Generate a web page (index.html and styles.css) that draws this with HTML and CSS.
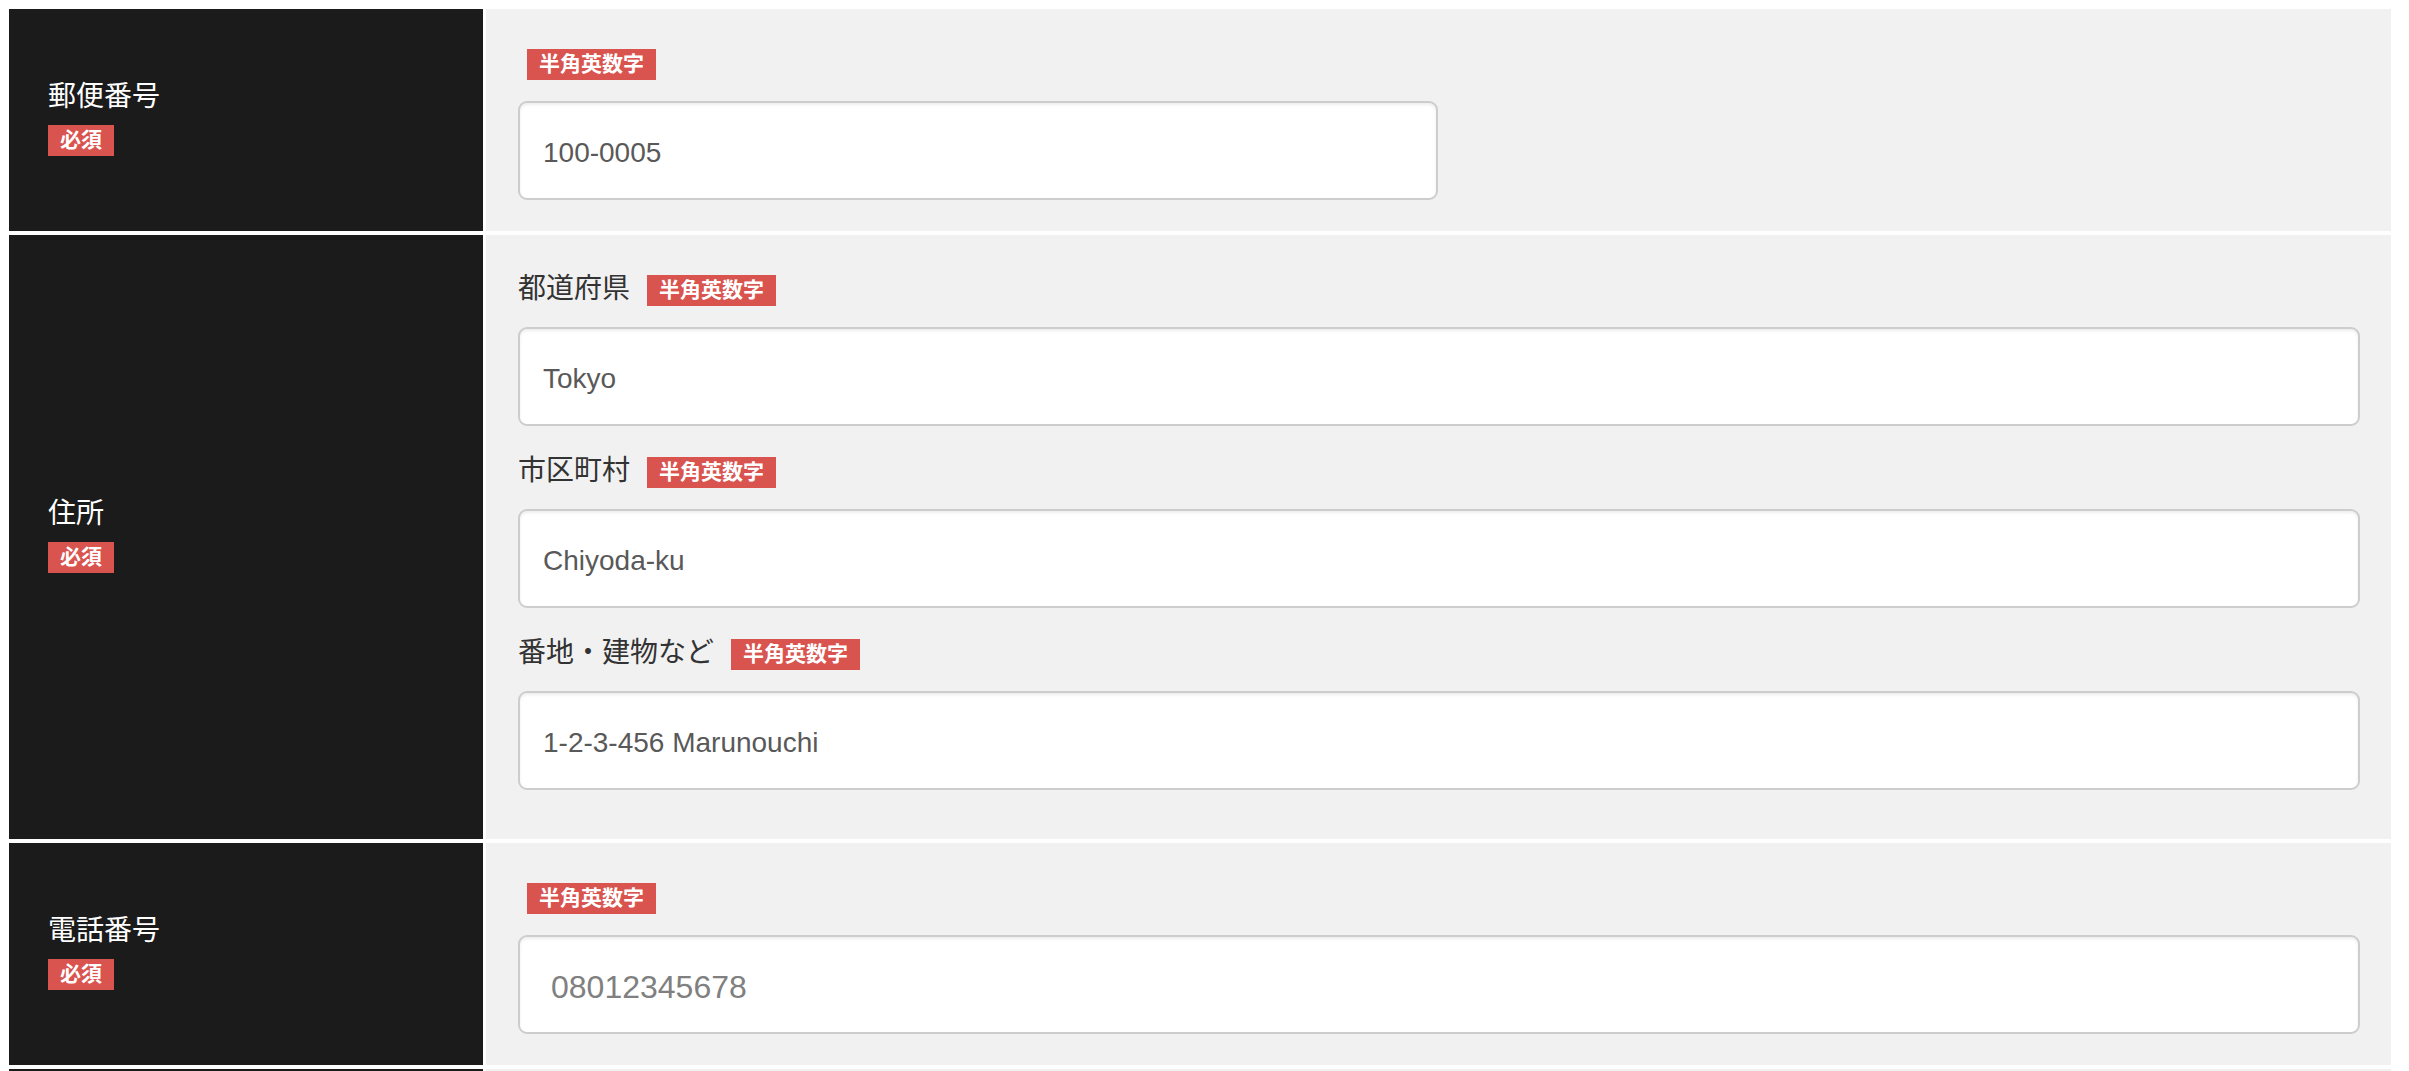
FILE: index.html
```html
<!DOCTYPE html>
<html lang="ja">
<head>
    <meta charset="UTF-8">
    <title>お届け先情報</title>
    <link rel="stylesheet" href="styles.css">
</head>
<body>

    <form class="form-table">
        <!-- 郵便番号 -->
        <div class="form-row">
            <div class="form-head">
                <span class="head-label">郵便番号</span>
                <span class="badge">必須</span>
            </div>
            <div class="form-body">
                <div class="field">
                    <div class="field-label"><span class="badge badge-note">半角英数字</span></div>
                    <input class="text-input text-input-short" type="text" name="zip" value="100-0005">
                </div>
            </div>
        </div>

        <!-- 住所 -->
        <div class="form-row">
            <div class="form-head">
                <span class="head-label">住所</span>
                <span class="badge">必須</span>
            </div>
            <div class="form-body form-body-multi">
                <div class="field">
                    <div class="field-label"><span class="field-name">都道府県</span><span class="badge badge-note">半角英数字</span></div>
                    <input class="text-input" type="text" name="pref" value="Tokyo">
                </div>
                <div class="field">
                    <div class="field-label"><span class="field-name">市区町村</span><span class="badge badge-note">半角英数字</span></div>
                    <input class="text-input" type="text" name="city" value="Chiyoda-ku">
                </div>
                <div class="field">
                    <div class="field-label"><span class="field-name">番地・建物など</span><span class="badge badge-note">半角英数字</span></div>
                    <input class="text-input" type="text" name="street" value="1-2-3-456 Marunouchi">
                </div>
            </div>
        </div>

        <!-- 電話番号 -->
        <div class="form-row">
            <div class="form-head">
                <span class="head-label">電話番号</span>
                <span class="badge">必須</span>
            </div>
            <div class="form-body">
                <div class="field">
                    <div class="field-label"><span class="badge badge-note">半角英数字</span></div>
                    <input class="text-input text-input-tel" type="tel" name="tel" value="08012345678">
                </div>
            </div>
        </div>

        <!-- 次の行（画面外） -->
        <div class="form-row form-row-next">
            <div class="form-head"></div>
            <div class="form-body"></div>
        </div>
    </form>

</body>
</html>
```

FILE: styles.css
```css
html {
    overflow: hidden;
}
body {
    font-family: "Liberation Sans", "Noto Sans CJK JP", sans-serif;
    background-color: #ffffff;
    color: #333;
    margin: 0;
    padding: 9px 18px 0 9px;
}
.form-table {
    display: flex;
    flex-direction: column;
    gap: 4px;
}
.form-row {
    display: grid;
    grid-template-columns: 474px 1fr;
    column-gap: 3px;
}
.form-row-next {
    min-height: 222px;
}
.form-head {
    background-color: #1b1b1b;
    display: flex;
    flex-direction: column;
    justify-content: center;
    align-items: flex-start;
    padding-left: 39px;
    padding-bottom: 4px;
}
.head-label {
    font-family: "Noto Sans CJK JP", sans-serif;
    color: #fff;
    font-size: 28px;
    line-height: 28px;
    margin-bottom: 17px;
}
.badge {
    display: inline-block;
    box-sizing: border-box;
    background-color: #d9534f;
    color: #fff;
    font-size: 21px;
    font-weight: bold;
    line-height: 29px;
    height: 31px;
    padding: 0 12px;
}
.form-body {
    background-color: #f1f1f1;
    padding: 40px 31px 31px 32px;
}
.form-body-multi {
    padding-bottom: 49px;
}
.field + .field {
    margin-top: 31px;
}
.field-label {
    display: flex;
    align-items: flex-start;
    height: 31px;
    margin-bottom: 21px;
    color: #333;
}
.field-name {
    font-family: "Noto Sans CJK JP", sans-serif;
    font-size: 28px;
    line-height: 28px;
    margin-top: -3px;
    margin-right: 8px;
}
.badge-note {
    margin-left: 9px;
}
.text-input {
    display: block;
    box-sizing: border-box;
    width: 100%;
    height: 99px;
    padding: 5px 23px 0;
    border: 2px solid #cdcdcd;
    border-radius: 9px;
    background: #fff;
    box-shadow: inset 0 2px 3px rgba(0,0,0,0.07);
    font-family: "Liberation Sans", sans-serif;
    font-size: 28px;
    color: #595959;
}
.text-input-short {
    width: 920px;
}
.text-input-tel {
    font-size: 32px;
    padding-left: 31px;
    color: #808080;
}
```
